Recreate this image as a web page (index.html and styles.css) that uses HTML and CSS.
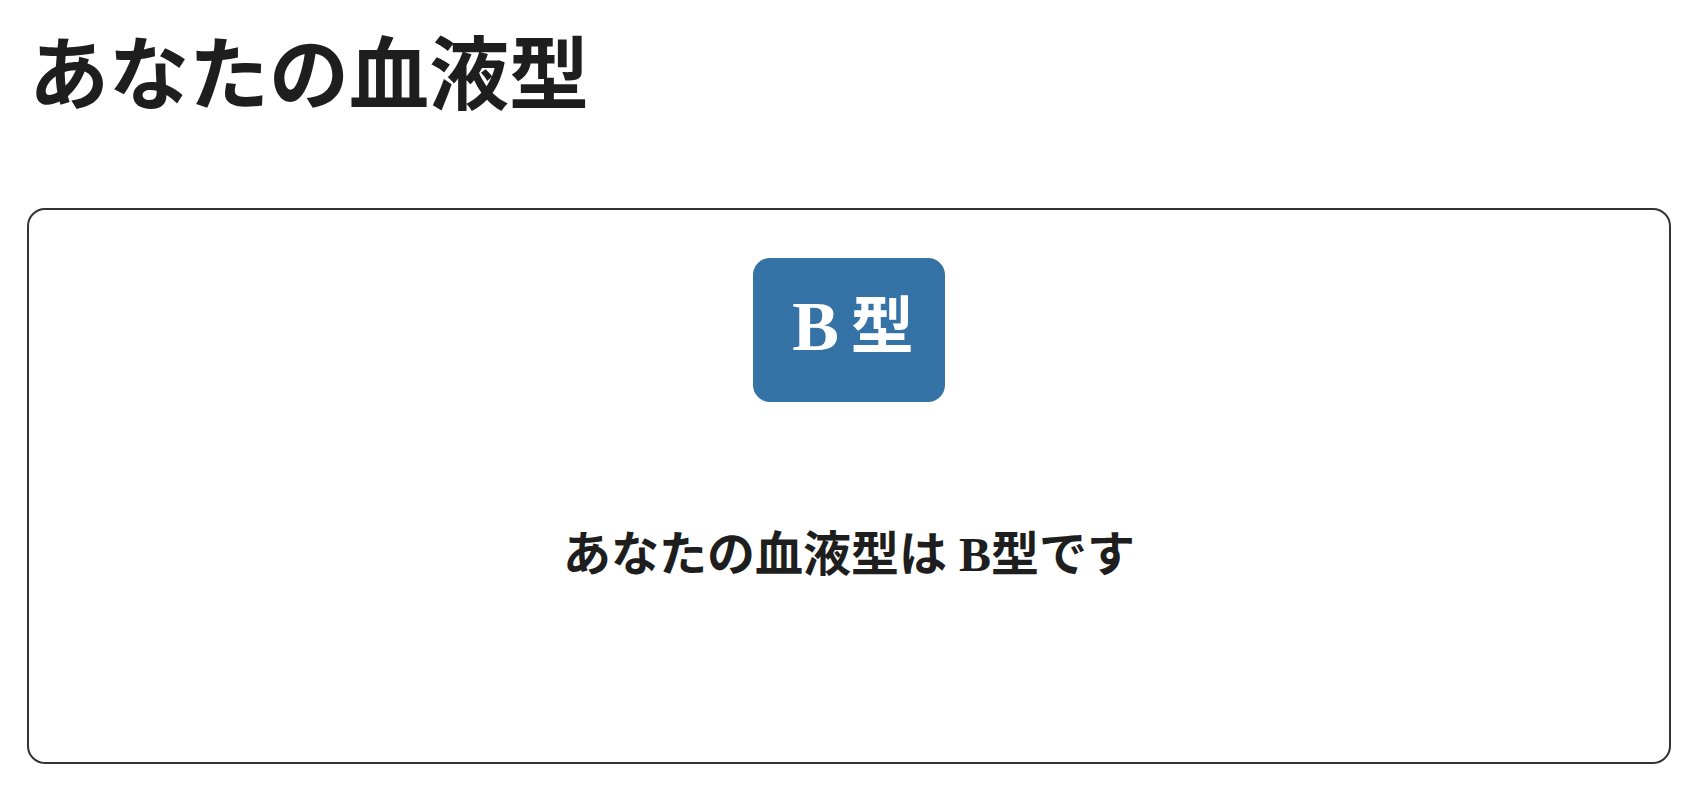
FILE: index.html
```html
<!DOCTYPE html>
<html lang="ja">
<head>
<meta charset="utf-8">
<title>あなたの血液型</title>
<link rel="stylesheet" href="styles.css">
</head>
<body>
<main class="page">
  <h1 class="title">あなたの血液型</h1>
  <section class="result-card">
    <div class="type-badge"><span class="type-letter">B</span>型</div>
    <p class="result-message">あなたの血液型は B型です</p>
  </section>
</main>
</body>
</html>
```

FILE: styles.css
```css
html, body {
  margin: 0;
  padding: 0;
  background: #ffffff;
}

.page {
  padding: 0 31px 0 27px;
  color: #1e1e1e;
}

.title {
  margin: 0;
  padding-top: 16px;
  padding-left: 2px;
  font-family: "Noto Sans CJK JP", "Noto Sans", sans-serif;
  font-weight: 700;
  font-size: 80px;
  line-height: 104px;
  height: 106px;
}

.result-card {
  margin-top: 86px;
  border: 2px solid #333333;
  border-radius: 18px;
  display: flex;
  flex-direction: column;
  align-items: center;
  padding-top: 48px;
  height: 504px;
}

.type-badge {
  width: 192px;
  height: 144px;
  border-radius: 17px;
  background: #3572a6;
  color: #ffffff;
  display: flex;
  align-items: center;
  justify-content: center;
  font-family: "Liberation Serif", "Noto Sans CJK JP", serif;
  font-weight: 700;
  font-size: 63px;
  line-height: 1;
  padding-left: 8px;
  padding-bottom: 6px;
  box-sizing: border-box;
}

.type-letter {
  font-size: 70px;
  margin-right: 12px;
}

.result-message {
  margin: 117px 0 0;
  font-family: "Liberation Serif", "Noto Sans CJK JP", serif;
  font-weight: 700;
  font-size: 48px;
  line-height: 72px;
  color: #1e1e1e;
}
```
